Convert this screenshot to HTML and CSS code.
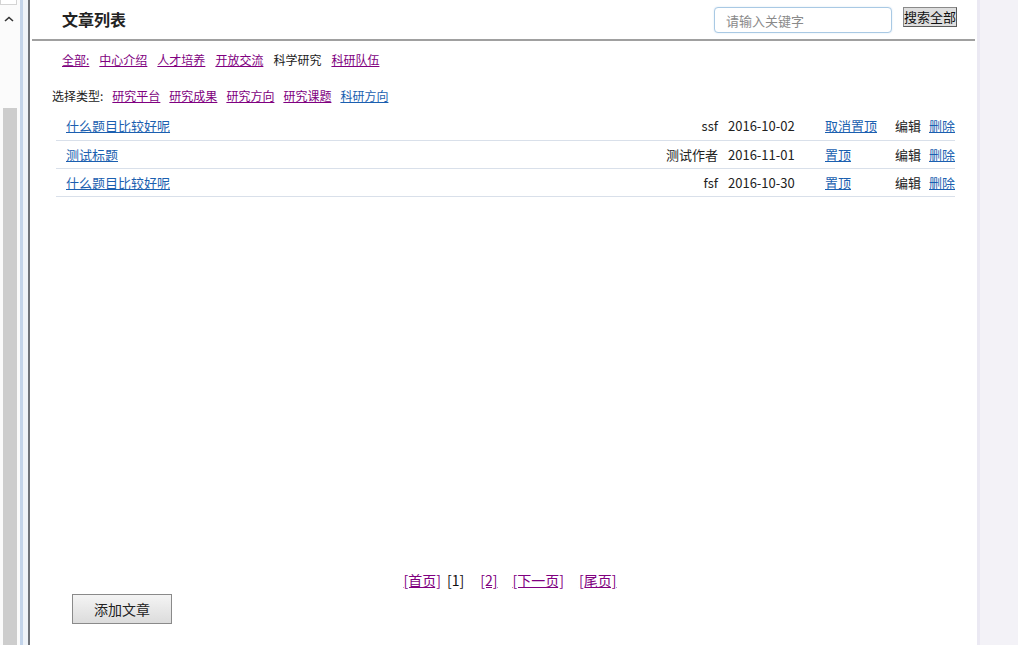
FILE: index.html
```html
<!DOCTYPE html>
<html lang="zh-CN">
<head>
<meta charset="utf-8">
<title>文章列表</title>
<link rel="stylesheet" href="styles.css">
</head>
<body>
<div class="screen">
  <div class="scrollbar">
    <div class="sb-top"></div>
    <div class="sb-arrow">
      <svg width="10" height="6" viewBox="0 0 10 6"><path d="M1 5 L5 1.5 L9 5" fill="none" stroke="#333" stroke-width="1.6"/></svg>
    </div>
    <div class="sb-thumb"></div>
  </div>
  <div class="frame-edge"><span class="edge-blue"></span><span class="edge-white"></span><span class="edge-dark"></span></div>
  <div class="main">
    <div class="header">
      <h1 class="title">文章列表</h1>
      <div class="search">
        <input class="search-input" type="text" placeholder="请输入关键字">
        <button class="search-btn">搜索全部</button>
      </div>
    </div>
    <div class="nav nav-cats">
      <a class="visited" href="#">全部:</a>
      <a class="visited" href="#">中心介绍</a>
      <a class="visited" href="#">人才培养</a>
      <a class="visited" href="#">开放交流</a>
      <span class="current">科学研究</span>
      <a class="visited" href="#">科研队伍</a>
    </div>
    <div class="nav nav-types">
      <span class="label">选择类型:</span>
      <a class="visited" href="#">研究平台</a>
      <a class="visited" href="#">研究成果</a>
      <a class="visited" href="#">研究方向</a>
      <a class="visited" href="#">研究课题</a>
      <a class="link" href="#">科研方向</a>
    </div>
    <table class="list">
      <colgroup>
        <col class="c-title"><col class="c-author"><col class="c-date"><col class="c-top"><col class="c-edit"><col class="c-del">
      </colgroup>
      <tr>
        <td class="t-title"><a class="link" href="#">什么题目比较好呢</a></td>
        <td class="t-author">ssf</td>
        <td class="t-date">2016-10-02</td>
        <td class="t-top"><a class="link" href="#">取消置顶</a></td>
        <td class="t-edit">编辑</td>
        <td class="t-del"><a class="link" href="#">删除</a></td>
      </tr>
      <tr>
        <td class="t-title"><a class="link" href="#">测试标题</a></td>
        <td class="t-author">测试作者</td>
        <td class="t-date">2016-11-01</td>
        <td class="t-top"><a class="link" href="#">置顶</a></td>
        <td class="t-edit">编辑</td>
        <td class="t-del"><a class="link" href="#">删除</a></td>
      </tr>
      <tr>
        <td class="t-title"><a class="link" href="#">什么题目比较好呢</a></td>
        <td class="t-author">fsf</td>
        <td class="t-date">2016-10-30</td>
        <td class="t-top"><a class="link" href="#">置顶</a></td>
        <td class="t-edit">编辑</td>
        <td class="t-del"><a class="link" href="#">删除</a></td>
      </tr>
    </table>
    <div class="spacer"></div>
    <div class="pager">
      <a class="visited" href="#">[首页]</a><span class="cur">[1]</span><a class="visited" href="#">[2]</a><a class="visited" href="#">[下一页]</a><a class="visited" href="#">[尾页]</a>
    </div>
    <div class="actions">
      <button class="add-btn">添加文章</button>
    </div>
  </div>
  <div class="side"></div>
</div>
</body>
</html>
```
FILE: styles.css
```css
* { box-sizing: border-box; }
html, body { margin: 0; padding: 0; height: 100%; overflow: hidden; }
body {
  font-family: "Microsoft YaHei", "Noto Sans CJK SC", "Noto Sans", sans-serif;
  color: #222;
  background: #fff;
}
.screen {
  display: flex;
  width: 1018px;
  height: 645px;
}
.scrollbar {
  width: 20px;
  display: flex;
  flex-direction: column;
  background: #fbfbfb;
}
.sb-top {
  height: 5px;
  margin-right: 3px;
  border: 1px solid #d4d4d4;
  border-top: none;
  background: #fff;
}
.sb-arrow {
  height: 28px;
  display: flex;
  align-items: center;
  justify-content: center;
  padding-right: 2px;
}
.sb-thumb {
  margin: 75px 3px 0 3px;
  flex: 1;
  background: #cdcdcd;
}
.frame-edge {
  width: 10px;
  display: flex;
}
.edge-blue { width: 3px; background: #c3d4ea; }
.edge-white { width: 5px; background: #eef3f9; }
.edge-dark { width: 2px; background: #6f737a; }
.main {
  flex: 1;
  display: flex;
  flex-direction: column;
  background: #fff;
  min-width: 0;
}
.header {
  height: 41px;
  margin: 0 2px;
  padding: 0 18px 0 30px;
  display: flex;
  align-items: flex-start;
  justify-content: space-between;
  border-bottom: 2px solid #a0a0a0;
}
.title {
  margin: 8px 0 0;
  font-size: 16px;
  font-weight: bold;
  line-height: 22px;
  color: #222;
}
.search {
  display: flex;
  align-items: flex-start;
  gap: 11px;
  padding-top: 7px;
}
.search-input {
  width: 178px;
  height: 26px;
  border: 1px solid #a9c9e4;
  border-radius: 4px;
  padding: 0 11px;
  font-family: inherit;
  font-size: 13px;
  color: #333;
  outline: none;
  box-shadow: 0 0 2px #d6e6f4;
}
.search-input::placeholder { color: #8a8a8a; }
.search-btn {
  width: 54px;
  height: 20px;
  padding: 0;
  border: 1px solid #5a5a5a;
  border-top-color: #8a8a8a;
  border-left-color: #8a8a8a;
  background: #dedede;
  font-family: inherit;
  font-size: 13px;
  line-height: 18px;
  color: #111;
}
.nav {
  display: flex;
  gap: 10px;
  font-size: 12px;
  line-height: 18px;
}
.nav-cats { padding-left: 32px; margin-top: 10px; }
.nav-types { padding-left: 22px; margin-top: 18px; gap: 9px; }
.visited { color: #800080; text-decoration: underline; }
.link { color: #1b5fb0; text-decoration: underline; }
.current, .label { color: #222; }
.list {
  margin: 7px 22px 0 26px;
  width: 899px;
  border-collapse: collapse;
  table-layout: fixed;
  font-size: 13px;
}
.c-title { width: 562px; }
.c-author { width: 100px; }
.c-date { width: 90px; }
.c-top { width: 77px; }
.c-edit { width: 34px; }
.c-del { width: 36px; }
.list td {
  height: 28px;
  padding: 0;
  border-bottom: 1px solid #d9e0ea;
  white-space: nowrap;
  vertical-align: middle;
}
.list .t-title { padding-left: 10px; }
.list .t-author { text-align: right; }
.list .t-date { padding-left: 10px; }
.list .t-top { padding-left: 17px; }
.list .t-edit { padding-left: 10px; }
.list .t-del { padding-left: 10px; }
.spacer { flex: 1; }
.pager {
  display: flex;
  justify-content: center;
  padding-left: 13px;
  font-size: 14px;
  line-height: 20px;
}
.pager .cur { color: #111; margin: 0 16px 0 6px; }
.pager a + a { margin-left: 15px; }
.actions {
  padding: 4px 0 21px 42px;
}
.add-btn {
  width: 100px;
  height: 30px;
  border: 1px solid #8a8a8a;
  background: linear-gradient(#f4f4f4, #dcdcdc);
  font-family: inherit;
  font-size: 14px;
  color: #222;
  padding: 0;
}
.side {
  width: 41px;
  background: #f3f2f7;
  border-left: 3px solid #ebe9f3;
}
```
